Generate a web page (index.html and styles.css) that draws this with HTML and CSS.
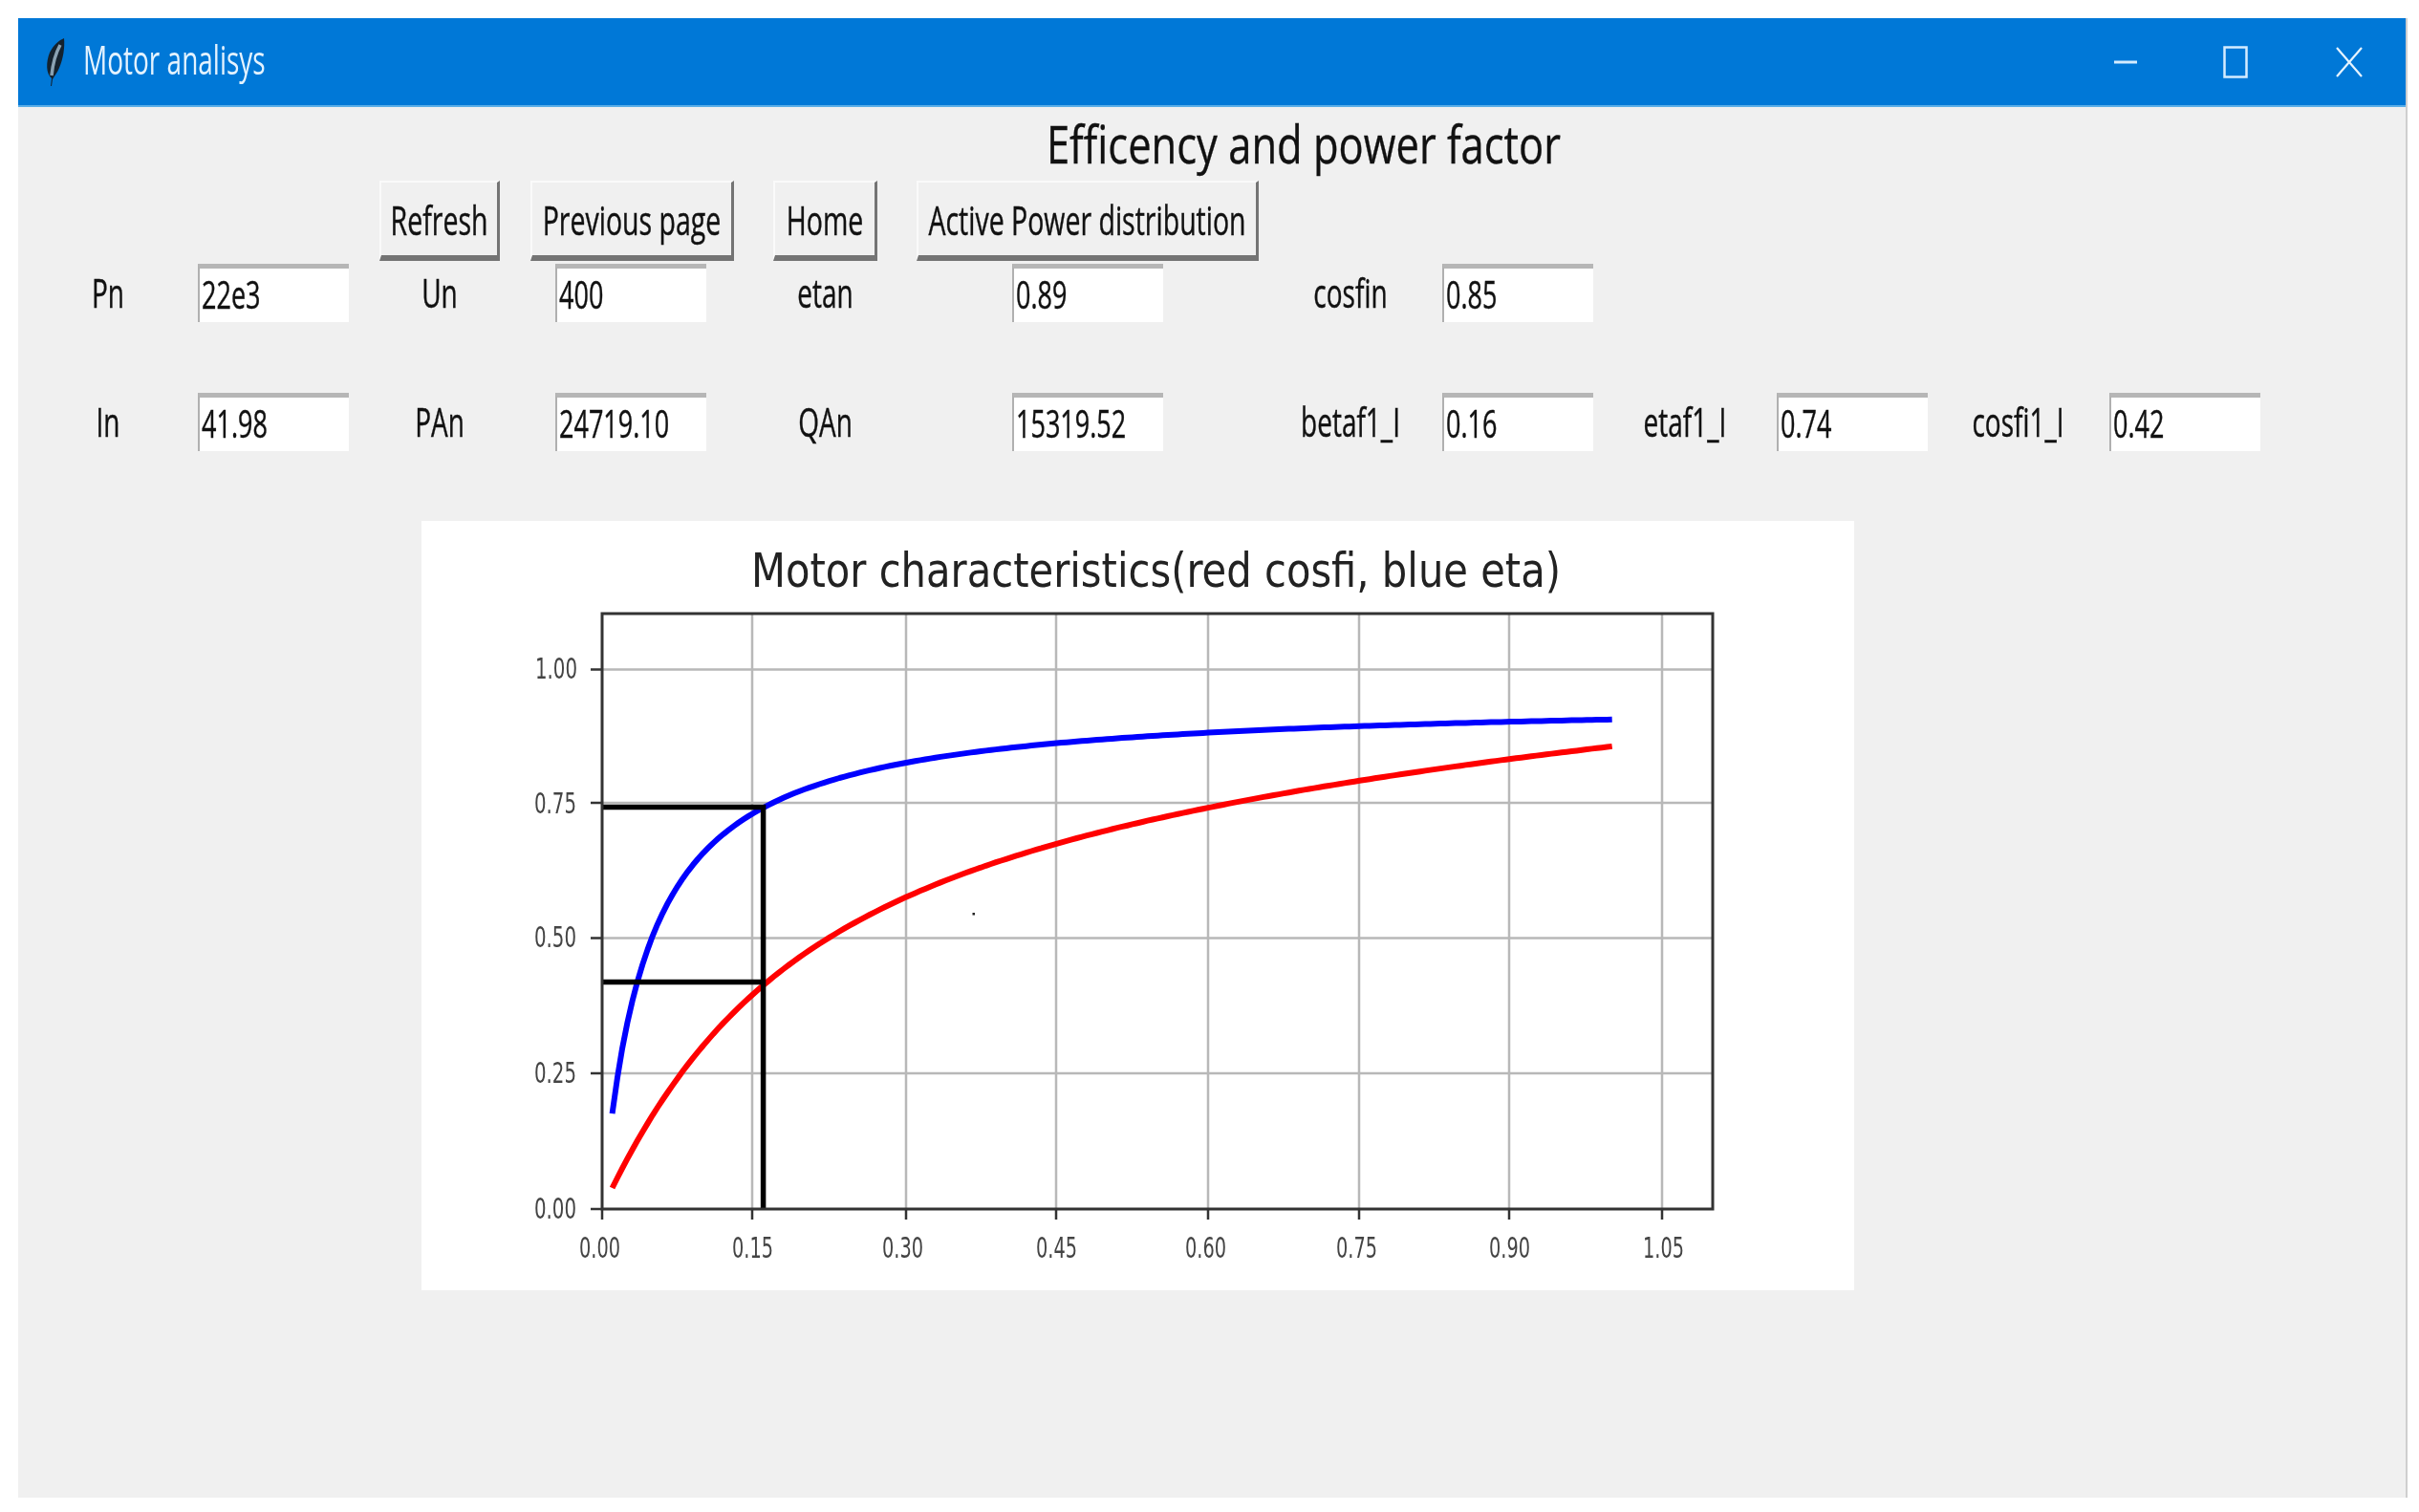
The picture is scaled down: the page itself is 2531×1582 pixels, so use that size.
FILE: index.html
```html
<!DOCTYPE html>
<html lang="en">
<head>
    <meta charset="UTF-8">
    <title>Motor analisys</title>
    <link rel="stylesheet" href="styles.css">
</head>
<body>
    <div class="window">
        <div class="titlebar">
            <svg class="feather" viewBox="0 0 24 52">
                <path d="M8 51 L9 43 C3 38 3 26 7 16 C11 8 17 3 22 1 C23 11 21 23 17 32 C15 37 12 40 10 44 L9 51 Z" fill="#14222e"/>
                <path d="M9 40 C10 30 13 17 18 8" fill="none" stroke="#8aa2b2" stroke-width="3.5"/>
            </svg>
            <span class="window-title"><span class="tall">Motor analisys</span></span>
            <div class="controls">
                <div class="control control-min">
                    <svg width="26" height="4" viewBox="0 0 26 4"><path d="M1 2 H25" stroke="#d5ecff" stroke-width="3"/></svg>
                </div>
                <div class="control control-max">
                    <svg width="26" height="34" viewBox="0 0 26 34"><rect x="1.5" y="1.5" width="23" height="31" fill="none" stroke="#d5ecff" stroke-width="2.5"/></svg>
                </div>
                <div class="control control-close">
                    <svg width="28" height="32" viewBox="0 0 28 32"><path d="M1 1 L27 31 M27 1 L1 31" stroke="#e6f4ff" stroke-width="2.2" fill="none"/></svg>
                </div>
            </div>
        </div>

        <h1 class="heading"><span class="tall">Efficency and power factor</span></h1>

        <div class="field-grid">
            <button class="btn btn-first"><span class="tall">Refresh</span></button>
            <button class="btn btn-fill"><span class="tall">Previous page</span></button>
            <button class="btn"><span class="tall">Home</span></button>
            <button class="btn btn-fill"><span class="tall">Active Power distribution</span></button>

            <div class="label row-start"><span class="tall">Pn</span></div>
            <div class="entry"><span class="tall">22e3</span></div>
            <div class="label"><span class="tall">Un</span></div>
            <div class="entry entry-second"><span class="tall">400</span></div>
            <div class="label"><span class="tall">etan</span></div>
            <div class="entry entry-center"><span class="tall">0.89</span></div>
            <div class="label"><span class="tall">cosfin</span></div>
            <div class="entry"><span class="tall">0.85</span></div>

            <div class="label row-start"><span class="tall">In</span></div>
            <div class="entry"><span class="tall">41.98</span></div>
            <div class="label"><span class="tall">PAn</span></div>
            <div class="entry entry-second"><span class="tall">24719.10</span></div>
            <div class="label"><span class="tall">QAn</span></div>
            <div class="entry entry-center"><span class="tall">15319.52</span></div>
            <div class="label"><span class="tall">betaf1_I</span></div>
            <div class="entry"><span class="tall">0.16</span></div>
            <div class="label"><span class="tall">etaf1_I</span></div>
            <div class="entry"><span class="tall">0.74</span></div>
            <div class="label"><span class="tall">cosfi1_I</span></div>
            <div class="entry"><span class="tall">0.42</span></div>
        </div>

        <div class="chart-card">
            <svg class="chart" viewBox="441 545 1499 805" width="1499" height="805">
                <text class="chart-title" x="786" y="614" textLength="847" lengthAdjust="spacingAndGlyphs">Motor characteristics(red cosfi, blue eta)</text>

                <!-- grid -->
                <g class="grid-lines">
                    <path d="M787 642 V1265 M948 642 V1265 M1105 642 V1265 M1264 642 V1265 M1422 642 V1265 M1579 642 V1265 M1739 642 V1265"/>
                    <path d="M630 700.5 H1792 M630 840 H1792 M630 981.5 H1792 M630 1123 H1792"/>
                </g>

                <!-- curves, filled in by chart.js -->
                <polyline class="curve-blue" id="etaCurve"/>
                <polyline class="curve-red" id="cosfiCurve"/>

                <!-- operating point -->
                <path class="guide" d="M630 844.5 H798.6 V1265 M630 1027.6 H798.6"/>
                <rect x="1017.5" y="955" width="2.5" height="2.5" fill="#222"/>

                <!-- axes -->
                <rect class="axes" x="630" y="642" width="1162" height="623"/>
                <path class="ticks" d="M618 700.5 H630 M618 840 H630 M618 981.5 H630 M618 1123 H630 M618 1265 H630 M630 1265 V1276 M787 1265 V1276 M948 1265 V1276 M1105 1265 V1276 M1264 1265 V1276 M1422 1265 V1276 M1579 1265 V1276 M1739 1265 V1276"/>

                <g class="tick-labels">
                    <text x="560" y="710" textLength="44" lengthAdjust="spacingAndGlyphs">1.00</text>
                    <text x="559" y="851" textLength="44" lengthAdjust="spacingAndGlyphs">0.75</text>
                    <text x="559" y="991" textLength="44" lengthAdjust="spacingAndGlyphs">0.50</text>
                    <text x="559" y="1133" textLength="44" lengthAdjust="spacingAndGlyphs">0.25</text>
                    <text x="559" y="1275" textLength="44" lengthAdjust="spacingAndGlyphs">0.00</text>

                    <text x="606" y="1316" textLength="43" lengthAdjust="spacingAndGlyphs">0.00</text>
                    <text x="766" y="1316" textLength="43" lengthAdjust="spacingAndGlyphs">0.15</text>
                    <text x="923" y="1316" textLength="43" lengthAdjust="spacingAndGlyphs">0.30</text>
                    <text x="1084" y="1316" textLength="43" lengthAdjust="spacingAndGlyphs">0.45</text>
                    <text x="1240" y="1316" textLength="43" lengthAdjust="spacingAndGlyphs">0.60</text>
                    <text x="1398" y="1316" textLength="43" lengthAdjust="spacingAndGlyphs">0.75</text>
                    <text x="1558" y="1316" textLength="43" lengthAdjust="spacingAndGlyphs">0.90</text>
                    <text x="1719" y="1316" textLength="43" lengthAdjust="spacingAndGlyphs">1.05</text>
                </g>
            </svg>
        </div>
    </div>
    <script src="chart.js"></script>
</body>
</html>
```

FILE: styles.css
```css
html, body {
    margin: 0;
    padding: 0;
    background-color: #ffffff;
}
body {
    padding: 19px 12px 15px 19px;
    font-family: "Open Sans", "Liberation Sans", sans-serif;
    color: #111111;
}
.window {
    box-sizing: border-box;
    width: 2500px;
    height: 1548px;
    background-color: #f0f0f0;
    border-right: 2px solid #cfcfcf;
    filter: blur(0.7px);
}
/* the shot is stretched vertically, so the text is too */
.tall {
    display: inline-block;
    transform: scaleY(1.5);
}
.titlebar {
    display: flex;
    align-items: center;
    height: 93px;
    padding-left: 26px;
    background-color: #0078d7;
    border-bottom: 2px solid #5aaee8;
    box-sizing: border-box;
}
.feather {
    width: 24px;
    height: 52px;
}
.window-title {
    margin: 0 0 7px 18px;
    font-size: 28px;
    color: #e4f3ff;
}
.controls {
    display: flex;
    margin-left: auto;
}
.control {
    display: flex;
    align-items: center;
    justify-content: center;
    height: 91px;
}
.control-min {
    width: 110px;
}
.control-max {
    width: 120px;
}
.control-close {
    width: 118px;
}
.heading {
    margin: 0;
    height: 77px;
    line-height: 78px;
    padding-left: 192px;
    text-align: center;
    font-size: 43.5px;
    font-weight: 400;
    -webkit-text-stroke: 0.3px #111111;
}
.heading .tall {
    transform: scaleY(1.25);
}
.field-grid {
    display: grid;
    grid-template-columns: 188px 158px 190px 213px 191px 358px 192px 158px 192px 157px 191px 159px;
    grid-template-rows: 87px 135px 62px;
    align-items: start;
    font-size: 27px;
    -webkit-text-stroke: 0.3px #111111;
}
.btn {
    box-sizing: border-box;
    height: 84px;
    padding: 0 12px;
    justify-self: center;
    white-space: nowrap;
    background-color: #f0f0f0;
    border-style: solid;
    border-width: 2px 3px 6px 2px;
    border-color: #fafafa #747474 #747474 #fafafa;
    font-family: inherit;
    font-size: 28.5px;
    color: #111111;
}
.btn-first {
    grid-column: 3;
    padding: 0 10px;
}
.btn-fill {
    justify-self: stretch;
    padding: 0;
}
.label {
    box-sizing: border-box;
    display: flex;
    align-items: center;
    justify-content: center;
    height: 61px;
    padding-bottom: 3px;
    font-size: 28px;
}
.row-start {
    grid-column: 1;
}
.entry {
    box-sizing: border-box;
    display: flex;
    align-items: center;
    height: 61px;
    width: 158px;
    padding-left: 2px;
    padding-bottom: 3px;
    background-color: #ffffff;
    border-top: 5px solid #b6b6b6;
    border-left: 2px solid #b0b0b0;
}
.entry-second {
    margin-left: 26px;
}
.entry-center {
    justify-self: center;
}
.chart-card {
    width: 1499px;
    height: 805px;
    margin: 72px 0 0 422px;
    background-color: #ffffff;
}
.chart {
    display: block;
}
.chart text {
    font-family: "DejaVu Sans", sans-serif;
}
.chart-title {
    font-size: 49px;
    fill: #222222;
}
.grid-lines path {
    fill: none;
    stroke: #b8b8b8;
    stroke-width: 2.5;
}
.curve-blue, .curve-red {
    fill: none;
    stroke-width: 6;
    stroke-linejoin: round;
}
.curve-blue {
    stroke: #0000ff;
}
.curve-red {
    stroke: #ff0000;
}
.guide {
    fill: none;
    stroke: #000000;
    stroke-width: 5.5;
}
.axes {
    fill: none;
    stroke: #333333;
    stroke-width: 3;
}
.ticks {
    fill: none;
    stroke: #333333;
    stroke-width: 2.5;
}
.tick-labels text {
    font-size: 31px;
    fill: #444444;
}
```

FILE: chart.js
```js
// plot area: beta 0..1.1 on x, value 0..1.104 on y (in svg coords)
function toX(beta) {
    return 630 + 1056.7 * beta;
}
function toY(value) {
    return 1265 - 564.5 * value;
}

function eta(beta) {
    return beta / (beta + 0.046 + 0.056 * beta);
}

function cosfi(beta) {
    const q = 0.25 + 0.68 * beta - 0.33 * beta * beta;
    return beta / Math.hypot(beta, q);
}

function plot(id, fn) {
    const points = [];
    for (let beta = 0.01; beta <= 1.0001; beta += 0.005) {
        points.push(toX(beta).toFixed(1) + ',' + toY(fn(beta)).toFixed(1));
    }
    document.getElementById(id).setAttribute('points', points.join(' '));
}

plot('etaCurve', eta);
plot('cosfiCurve', cosfi);
```
